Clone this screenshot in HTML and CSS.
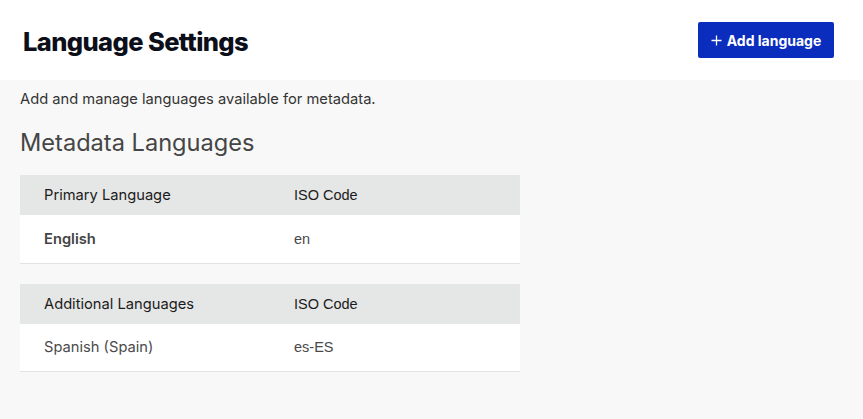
FILE: index.html
```html
<!DOCTYPE html>
<html>
<head>
<meta charset="utf-8">
<link rel="stylesheet" href="styles.css">
</head>
<body>
<header class="page-header">
  <h1 class="title">Language Settings</h1>
  <button class="btn-primary"><svg class="plus" width="11" height="11" viewBox="0 0 11 11"><path d="M5.5 0.5v10M0.5 5.5h10" stroke="#fff" stroke-width="1.3" fill="none"/></svg>Add language</button>
</header>
<main class="content">
  <p class="desc">Add and manage languages available for metadata.</p>
  <h2 class="section-title">Metadata Languages</h2>
  <table class="lang-table">
    <thead><tr><th>Primary Language</th><th class="code">ISO Code</th></tr></thead>
    <tbody><tr><td class="strong">English</td><td class="code">en</td></tr></tbody>
  </table>
  <table class="lang-table">
    <thead><tr><th>Additional Languages</th><th class="code">ISO Code</th></tr></thead>
    <tbody><tr><td>Spanish (Spain)</td><td class="code">es-ES</td></tr></tbody>
  </table>
</main>
</body>
</html>
```
FILE: styles.css
```css
* { box-sizing: border-box; }
html, body { margin: 0; padding: 0; }
body {
  background: #f8f8f8;
  font-family: "Inter", "Liberation Sans", sans-serif;
  color: #1b1b1b;
  height: 419px;
  overflow: hidden;
}
.page-header {
  background: #fff;
  height: 80px;
  display: flex;
  align-items: center;
  justify-content: space-between;
  padding: 0 29px 0 23px;
}
.title {
  margin: 0;
  font-size: 25.5px;
  font-weight: 800;
  letter-spacing: -0.6px;
  color: #0c0f1a;
  padding-top: 2px;
}
.btn-primary {
  background: #0a2dbd;
  color: #fff;
  border: none;
  border-radius: 2px;
  height: 36px;
  width: 136px;
  font-family: inherit;
  font-size: 14px;
  font-weight: 700;
  display: flex;
  align-items: center;
  justify-content: center;
  gap: 5px;
  padding: 0;
}
.plus { display: block; }
.content { padding: 10px 20px 0 20px; }
.desc { margin: 0; font-size: 14.7px; color: #333; line-height: 18px; }
.section-title {
  margin: 20px 0 18px 0;
  font-size: 23.6px;
  font-weight: 400;
  color: #454545;
  line-height: 29px;
}
.lang-table {
  width: 500px;
  border-collapse: collapse;
  margin-bottom: 20px;
  font-size: 14.7px;
}
.lang-table th {
  background: #e5e6e6;
  height: 40px;
  text-align: left;
  font-weight: 400;
  color: #1b1b1b;
  padding: 0 24px;
  width: 250px;
}
.lang-table td {
  background: #fff;
  height: 48px;
  padding: 0 24px;
  color: #4a4a4a;
  border-bottom: 1px solid #e3e3e3;
}
.lang-table .strong { font-weight: 600; color: #444; }
.lang-table .code { font-family: "Liberation Sans", Arial, sans-serif; font-size: 14.5px; }
```
